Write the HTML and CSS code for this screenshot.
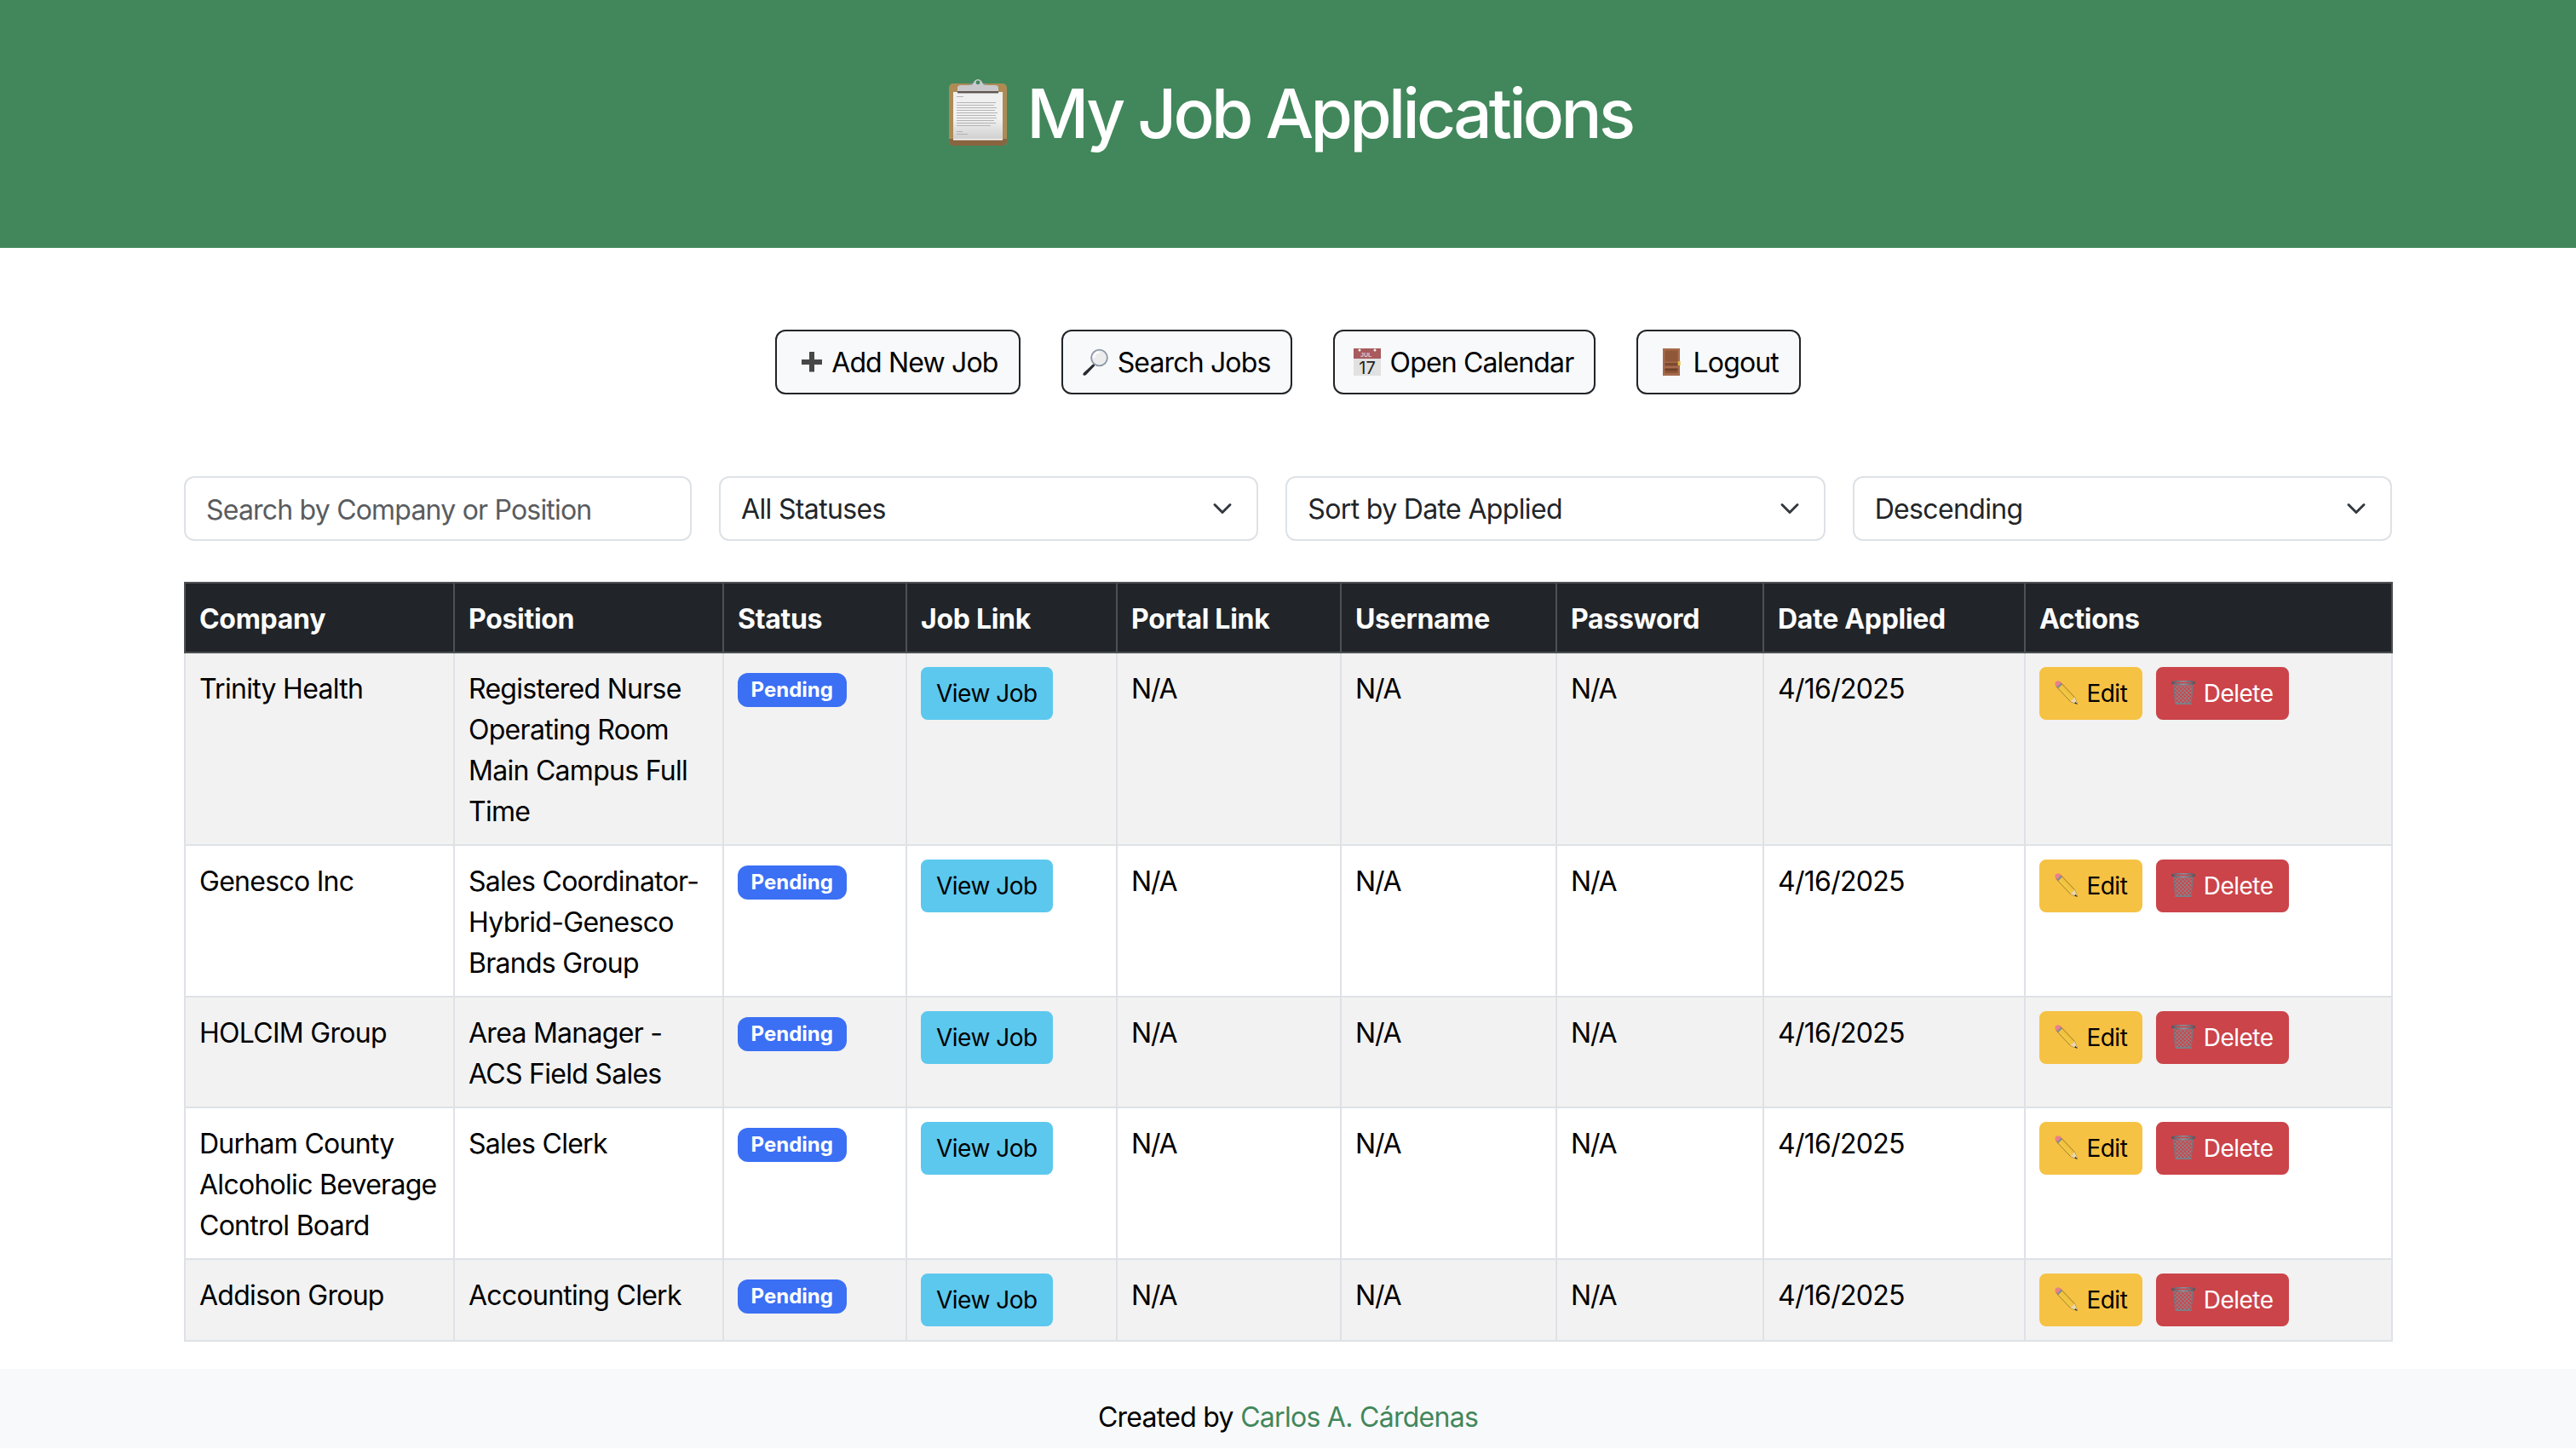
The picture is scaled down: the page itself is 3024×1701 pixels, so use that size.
FILE: index.html
```html
<!DOCTYPE html>
<html lang="en">
<head>
<meta charset="utf-8">
<title>My Job Applications</title>
<link rel="stylesheet" href="styles.css">
</head>
<body>
<svg class="sprite" aria-hidden="true">
  <defs>
    <linearGradient id="pencilBody" x1="0" y1="1" x2="1" y2="0"><stop offset="0" stop-color="#fbe06a"/><stop offset=".55" stop-color="#f0c23c"/><stop offset="1" stop-color="#b98a2a"/></linearGradient>
    <linearGradient id="rimGrad" x1="0" y1="0" x2="1" y2="0"><stop offset="0" stop-color="#4f5761"/><stop offset=".5" stop-color="#8d96a0"/><stop offset="1" stop-color="#4f5761"/></linearGradient>
    <pattern id="mesh" width="3.2" height="3.2" patternUnits="userSpaceOnUse" patternTransform="rotate(45)">
      <rect width="3.2" height="3.2" fill="none"/>
      <path d="M0 0H3.2M0 0V3.2" stroke="#868a92" stroke-width="1.5"/>
    </pattern>
    <symbol id="pencil" viewBox="0 0 28 28">
      <path d="M1.6 6.6 6.6 1.6 23.6 19.6 26.6 27.6 18.6 24.6Z" fill="url(#pencilBody)" stroke="#8f6d24" stroke-width=".8"/>
      <path d="M18.6 24.6 23.6 19.6 26.6 27.6Z" fill="#ead5ae"/>
      <path d="M24.6 24.9 26.8 27.8 23.2 26.6Z" fill="#222"/>
      <path d="M.9 5.2C-.2 3.6.6 1.6 1.9.9 3.3-.2 5.2.1 6.6 1.6L8 3 3 8Z" fill="#e9808c"/>
      <path d="M2.6 7.8 7.6 2.8 9 4.2 4 9.2Z" fill="#7f8997"/>
    </symbol>
    <symbol id="trash" viewBox="0 0 28 28">
      <path d="M2.5 3H25.5L23 27.2H5Z" fill="url(#mesh)"/>
      <path d="M2.5 3 5 27.2M25.5 3 23 27.2" stroke="#74777e" stroke-width="1.4" fill="none"/>
      <path d="M4.6 26H23.4V28H4.6Z" fill="#7a8088"/>
      <ellipse cx="14" cy="2.5" rx="13.4" ry="1.9" fill="none" stroke="url(#rimGrad)" stroke-width="1.8"/>
    </symbol>
  </defs>
</svg>

<header class="hero">
  <h1 class="hero-title">
    <svg class="emoji-title" viewBox="0 0 80 80" aria-hidden="true">
      <defs><linearGradient id="paperGrad" x1="0" y1="0" x2="0" y2="1"><stop offset="0" stop-color="#efefef"/><stop offset=".55" stop-color="#f2f2f2"/><stop offset="1" stop-color="#cfcfcf"/></linearGradient></defs>
      <rect x="6" y="6" width="68" height="73" rx="5" fill="#ae8a55"/>
      <path d="M6 71H74V74A5 5 0 0 1 69 79H11A5 5 0 0 1 6 74Z" fill="#886540"/>
      <rect x="11" y="16" width="58" height="56" fill="url(#paperGrad)"/>
      <rect x="11" y="71" width="58" height="1.5" fill="#fafafa"/>
      <g fill="#adadad">
        <rect x="15" y="21" width="8" height=".9"/>
        <rect x="15" y="28" width="46" height=".9"/><rect x="15" y="31" width="44" height=".9"/>
        <rect x="15" y="34" width="47" height=".9"/><rect x="15" y="37" width="45" height=".9"/>
        <rect x="15" y="40" width="48" height=".9"/><rect x="15" y="43" width="46" height=".9"/>
        <rect x="15" y="46" width="47" height=".9"/><rect x="15" y="49" width="44" height=".9"/>
        <rect x="15" y="52" width="46" height=".9"/><rect x="15" y="55" width="40" height=".9"/>
        <rect x="15" y="62" width="7" height=".9"/><rect x="15" y="65" width="13" height=".9"/>
      </g>
      <path d="M28 9 33 6 47 6 52 9Z" fill="#8ba0c4"/>
      <rect x="16" y="15" width="48" height="2.4" fill="#5e5650"/>
      <path d="M16 15V11Q16 8 20 8H33L36 3Q40-1 44 3L47 8H60Q64 8 64 11V15Z" fill="#c9c9cb"/>
      <circle cx="40" cy="4.8" r="2.4" fill="#41875b"/>
    </svg>
    My Job Applications
  </h1>
</header>

<main class="container">
  <nav class="toolbar">
    <a class="tool-btn" href="#"><svg class="emoji" viewBox="0 0 32 32" aria-hidden="true"><path d="M14 4H20V13H29V19H20V27.500H14V19H5V13H14Z" fill="#474747"/></svg> Add New Job</a>
    <a class="tool-btn" href="#"><svg class="emoji emoji-shift" viewBox="0 0 32 32" aria-hidden="true">
      <path d="M13.500 18 2.300 28.500Q.5 30.500 2 31.500 3.500 32.500 5.500 30.500L15.500 20Z" fill="#262a30"/>
      <circle cx="20.500" cy="11" r="10.300" fill="#8c98a8"/>
      <circle cx="20.500" cy="11" r="8.500" fill="#ececed"/>
      <path d="M14 11A6.500 6.500 0 0 1 20.500 4.500" fill="none" stroke="#fff" stroke-width="2"/>
    </svg> Search Jobs</a>
    <a class="tool-btn" href="#"><svg class="emoji emoji-shift" viewBox="0 0 32 32" aria-hidden="true">
      <rect x="0" y="0" width="32" height="32" fill="#e1e1e1"/>
      <rect x="0" y="0" width="32" height="12" fill="#a85a5d"/>
      <circle cx="7" cy="2" r="1.500" fill="#f2f2f2"/><circle cx="25" cy="2" r="1.500" fill="#f2f2f2"/>
      <text class="cal-month" x="8" y="10">JUL</text>
      <text class="cal-day" x="16" y="29.500">17</text>
    </svg> Open Calendar</a>
    <a class="tool-btn" href="#"><svg class="emoji" viewBox="0 0 32 32" aria-hidden="true">
      <rect x="5" y="0" width="20" height="32" fill="#a66a4c"/>
      <rect x="7.500" y="2.500" width="15" height="13" fill="#8f5637"/>
      <rect x="7.500" y="17" width="15" height="3.500" fill="#7c4a2e"/>
      <rect x="7.500" y="23" width="15" height="6" fill="#8a5235"/>
      <rect x="7.500" y="24" width="15" height="2" fill="#6f4027"/>
      <rect x="22.800" y="15" width="2.800" height="5" fill="#e2ba3e"/>
    </svg> Logout</a>
  </nav>

  <form class="filters">
    <input class="field field-input" type="text" placeholder="Search by Company or Position">
    <select class="field field-select"><option>All Statuses</option></select>
    <select class="field field-select"><option>Sort by Date Applied</option></select>
    <select class="field field-select"><option>Descending</option></select>
  </form>

  <table class="jobs">
    <colgroup>
      <col class="c-company"><col class="c-position"><col class="c-status"><col class="c-job"><col class="c-portal"><col class="c-user"><col class="c-pass"><col class="c-date"><col class="c-actions">
    </colgroup>
    <thead>
      <tr><th>Company</th><th>Position</th><th>Status</th><th>Job Link</th><th>Portal Link</th><th>Username</th><th>Password</th><th>Date Applied</th><th>Actions</th></tr>
    </thead>
    <tbody>
      <tr>
        <td>Trinity Health</td><td>Registered Nurse Operating Room Main Campus Full Time</td>
        <td class="ctl"><span class="badge">Pending</span></td><td class="ctl"><a class="sm-btn sm-info" href="#">View Job</a></td>
        <td class="na">N/A</td><td class="na">N/A</td><td class="na">N/A</td><td>4/16/2025</td>
        <td class="ctl"><a class="sm-btn sm-warn" href="#"><svg class="emoji-sm" aria-hidden="true"><use href="#pencil"/></svg> Edit</a><a class="sm-btn sm-danger" href="#"><svg class="emoji-sm" aria-hidden="true"><use href="#trash"/></svg> Delete</a></td>
      </tr>
      <tr>
        <td>Genesco Inc</td><td>Sales Coordinator-Hybrid-Genesco Brands Group</td>
        <td class="ctl"><span class="badge">Pending</span></td><td class="ctl"><a class="sm-btn sm-info" href="#">View Job</a></td>
        <td class="na">N/A</td><td class="na">N/A</td><td class="na">N/A</td><td>4/16/2025</td>
        <td class="ctl"><a class="sm-btn sm-warn" href="#"><svg class="emoji-sm" aria-hidden="true"><use href="#pencil"/></svg> Edit</a><a class="sm-btn sm-danger" href="#"><svg class="emoji-sm" aria-hidden="true"><use href="#trash"/></svg> Delete</a></td>
      </tr>
      <tr>
        <td>HOLCIM Group</td><td>Area Manager - ACS Field Sales</td>
        <td class="ctl"><span class="badge">Pending</span></td><td class="ctl"><a class="sm-btn sm-info" href="#">View Job</a></td>
        <td class="na">N/A</td><td class="na">N/A</td><td class="na">N/A</td><td>4/16/2025</td>
        <td class="ctl"><a class="sm-btn sm-warn" href="#"><svg class="emoji-sm" aria-hidden="true"><use href="#pencil"/></svg> Edit</a><a class="sm-btn sm-danger" href="#"><svg class="emoji-sm" aria-hidden="true"><use href="#trash"/></svg> Delete</a></td>
      </tr>
      <tr>
        <td>Durham County Alcoholic Beverage Control Board</td><td>Sales Clerk</td>
        <td class="ctl"><span class="badge">Pending</span></td><td class="ctl"><a class="sm-btn sm-info" href="#">View Job</a></td>
        <td class="na">N/A</td><td class="na">N/A</td><td class="na">N/A</td><td>4/16/2025</td>
        <td class="ctl"><a class="sm-btn sm-warn" href="#"><svg class="emoji-sm" aria-hidden="true"><use href="#pencil"/></svg> Edit</a><a class="sm-btn sm-danger" href="#"><svg class="emoji-sm" aria-hidden="true"><use href="#trash"/></svg> Delete</a></td>
      </tr>
      <tr>
        <td>Addison Group</td><td>Accounting Clerk</td>
        <td class="ctl"><span class="badge">Pending</span></td><td class="ctl"><a class="sm-btn sm-info" href="#">View Job</a></td>
        <td class="na">N/A</td><td class="na">N/A</td><td class="na">N/A</td><td>4/16/2025</td>
        <td class="ctl"><a class="sm-btn sm-warn" href="#"><svg class="emoji-sm" aria-hidden="true"><use href="#pencil"/></svg> Edit</a><a class="sm-btn sm-danger" href="#"><svg class="emoji-sm" aria-hidden="true"><use href="#trash"/></svg> Delete</a></td>
      </tr>
    </tbody>
  </table>
</main>

<footer class="site-footer">Created by <a class="footer-link" href="#">Carlos A. Cárdenas</a></footer>
</body>
</html>
```
FILE: styles.css
```css
* { box-sizing: border-box; }
html, body { margin: 0; padding: 0; }
body {
  font-family: Inter, "Liberation Sans", sans-serif;
  font-size: 32px;
  line-height: 48px;
  letter-spacing: -0.72px;
  color: #000;
  background: #fff;
}
.sprite { position: absolute; width: 0; height: 0; overflow: hidden; }

.hero {
  background: #41875b;
  color: #fff;
  height: 291px;
  padding-top: 85px;
  text-align: center;
}
.hero-title {
  margin: 0;
  font-size: 80px;
  line-height: 96px;
  font-weight: 500;
  letter-spacing: -3.7px;
}
.emoji-title { width: 80px; height: 80px; vertical-align: -10px; }

.container { width: 2592px; margin: 0 auto; }

.toolbar {
  display: flex;
  justify-content: center;
  gap: 48px;
  margin-top: 96px;
}
.tool-btn {
  display: block;
  padding: 13px 24px 11px;
  border: 2px solid #212529;
  border-radius: 12px;
  background: #f8f9fa;
  color: #000;
  text-decoration: none;
  white-space: nowrap;
  letter-spacing: -0.85px;
}
.emoji { width: 32px; height: 32px; vertical-align: -4px; overflow: visible; }
.emoji-shift { margin-left: -2px; margin-right: 2px; }
.cal-month { font: 700 7px "Liberation Sans", sans-serif; letter-spacing: 0; fill: #e6c9ca; }
.cal-day { font: 400 20px Inter, sans-serif; letter-spacing: 0; fill: #222; text-anchor: middle; }

.filters {
  display: grid;
  grid-template-columns: 596px repeat(3, 1fr);
  gap: 32px;
  margin-top: 96px;
}
.field {
  display: block;
  width: 100%;
  height: 76px;
  padding: 13px 24px 11px;
  border: 2px solid #dee2e6;
  border-radius: 12px;
  background-color: #fff;
  color: #212529;
  font: inherit;
  letter-spacing: -0.65px;
  outline: none;
}
.field-input { letter-spacing: -0.8px; }
.field::placeholder { color: #595c5f; opacity: 1; }
.field-select {
  appearance: none;
  -webkit-appearance: none;
  padding-right: 72px;
  background-image: url("data:image/svg+xml,%3csvg xmlns='http://www.w3.org/2000/svg' viewBox='0 0 16 16'%3e%3cpath fill='none' stroke='%23343a40' stroke-linecap='round' stroke-linejoin='round' stroke-width='2' d='m2 5 6 6 6-6'/%3e%3c/svg%3e");
  background-repeat: no-repeat;
  background-position: right 24px center;
  background-size: 32px 24px;
}

.jobs {
  width: 2591px;
  margin-top: 48px;
  border-collapse: collapse;
  table-layout: fixed;
}
.c-company { width: 316px; }
.c-position { width: 316px; }
.c-status { width: 215px; }
.c-job { width: 247px; }
.c-portal { width: 263px; }
.c-user { width: 253px; }
.c-pass { width: 243px; }
.c-date { width: 307px; }
.c-actions { width: 431px; }
.jobs th, .jobs td {
  padding: 18px 16px 14px;
  border: 2px solid #dee2e6;
  text-align: left;
  vertical-align: top;
}
.jobs td.ctl { padding: 16px; letter-spacing: normal; }
.jobs td.na { letter-spacing: -1.2px; }
.jobs th {
  background: #212529;
  color: #fff;
  font-weight: 700;
  letter-spacing: -0.3px;
  border-color: #4d5154;
}
.jobs tbody tr:nth-child(odd) td { background: #f2f2f2; }

.badge {
  display: inline-block;
  padding: 8.4px 15.6px;
  border-radius: 12px;
  background: #3b70f5;
  color: #fff;
  font-size: 24px;
  font-weight: 700;
  line-height: 1;
  letter-spacing: 0;
  vertical-align: baseline;
}
.sm-btn {
  display: inline-block;
  padding: 8px 16px;
  border: 2px solid transparent;
  border-radius: 8px;
  color: #000;
  font-size: 28px;
  line-height: 42px;
  letter-spacing: -0.5px;
  text-decoration: none;
  white-space: nowrap;
}
.sm-info { background: #5cc8ee; border-color: #5cc8ee; }
.sm-warn { background: #f6c244; border-color: #f6c244; margin-right: 16px; }
.sm-danger { background: #cb444a; border-color: #cb444a; color: #fff; }
.emoji-sm { width: 28px; height: 28px; margin-right: 2px; vertical-align: -3px; }

.site-footer {
  margin-top: 32px;
  height: 93px;
  padding-top: 33px;
  background: #f8f9fa;
  text-align: center;
}
.footer-link { color: #41875b; text-decoration: none; }
```
